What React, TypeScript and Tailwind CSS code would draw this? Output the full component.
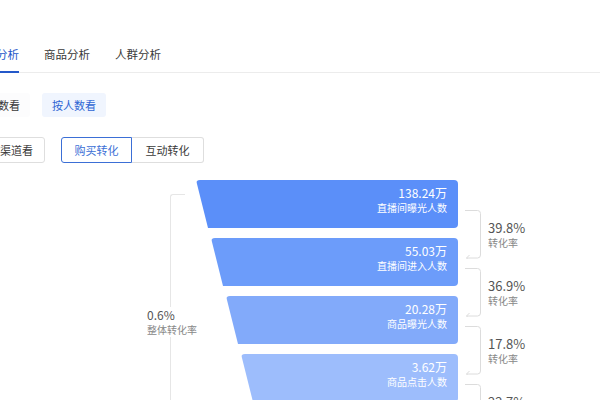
import React from 'react'

const bars = [
  { value: '138.24万', label: '直播间曝光人数', w: 'w-[262px]', bg: 'bg-[#5b8ff9]' },
  { value: '55.03万', label: '直播间进入人数', w: 'w-[247px]', bg: 'bg-[#6c9cfa]' },
  { value: '20.28万', label: '商品曝光人数', w: 'w-[232px]', bg: 'bg-[#82aafa]' },
  { value: '3.62万', label: '商品点击人数', w: 'w-[217px]', bg: 'bg-[#9dbdfc]' },
]

const rates = ['39.8%', '36.9%', '17.8%', '22.7%']

function Bracket() {
  return (
    <svg width="17" height="49" viewBox="0 0 17 49" className="shrink-0">
      <path d="M0 0.5 H12.5 a3 3 0 0 1 3 3 V45 a3 3 0 0 1 -3 3 H1.5" fill="none" stroke="#dcdcdc" strokeWidth="1" />
      <path d="M4.5 45 L1.5 48 L4.5 51" fill="none" stroke="#dcdcdc" strokeWidth="1" />
    </svg>
  )
}

export default function App() {
  return (
    <div className="w-[600px] h-[400px] overflow-hidden bg-white text-[#3a3a3a] font-['Noto_Sans_CJK_SC',sans-serif]">
      {/* tabs */}
      <div className="mt-[44px] flex border-b border-[#ececec]">
        <div className="-ml-[27px] flex gap-[25px] text-[11.5px]">
          <div className="leading-[20px] pb-[7px] border-b-2 border-[#2458c9] -mb-px text-[#2458c9]">流量分析</div>
          <div className="leading-[20px] pb-[7px] -mb-px">商品分析</div>
          <div className="leading-[20px] pb-[7px] -mb-px">人群分析</div>
        </div>
      </div>

      {/* segment */}
      <div className="mt-[20px] -ml-[34px] flex gap-[12px] text-[11px]">
        <div className="h-[24px] px-[10px] flex items-center rounded-[3px] bg-[#fcfcfd]">按次数看</div>
        <div className="h-[24px] px-[10px] flex items-center rounded-[3px] bg-[#f0f5fe] text-[#2f66d4]">按人数看</div>
      </div>

      {/* buttons */}
      <div className="mt-[20px] -ml-[24px] flex text-[11px]">
        <div className="h-[26px] pl-[12px] pr-[11px] flex items-center border border-[#dedede] rounded-[3px]">按渠道看</div>
        <div className="ml-[16px] h-[26px] w-[71px] flex items-center justify-center border border-[#3b6fd6] rounded-l-[3px] text-[#3b6fd6]">购买转化</div>
        <div className="h-[26px] w-[72px] flex items-center justify-center border border-l-0 border-[#dedede] rounded-r-[3px]">互动转化</div>
      </div>

      {/* funnel */}
      <div className="mt-[17px] pl-[147px] flex">
        <div className="w-[49px] shrink-0 flex flex-col">
          <div className="ml-[23px] mt-[14px] h-[113px] w-[15px] border-l border-t border-[#e6e6e6] rounded-tl-[3px]" />
          <div className="bg-white">
            <div className="text-[12px] leading-[16px] text-[#555]">0.6%</div>
            <div className="text-[10px] leading-[14px] text-[#888] whitespace-nowrap">整体转化率</div>
          </div>
          <div className="ml-[23px] flex-1 border-l border-[#e6e6e6]" />
        </div>

        <div className="w-[262px] shrink-0 flex flex-col items-end gap-[10px]">
          {bars.map((b) => (
            <div
              key={b.label}
              className={`${b.w} ${b.bg} h-[48px] shrink-0 rounded-[4px] [clip-path:polygon(0_0,100%_0,100%_100%,12px_100%)] text-right pr-[11px] pt-[5px] text-white`}
            >
              <div className="text-[12px] leading-[16px]">{b.value}</div>
              <div className="text-[10px] leading-[14px]">{b.label}</div>
            </div>
          ))}
        </div>

        <div className="ml-[7px] mt-[30px] flex flex-col gap-[10px]">
          {rates.map((r) => (
            <div key={r} className="h-[48px] flex gap-[6px]">
              <Bracket />
              <div className="pt-[10px]">
                <div className="text-[13px] leading-[15px] text-[#555]">{r}</div>
                <div className="mt-[1px] text-[10px] leading-[14px] text-[#888]">转化率</div>
              </div>
            </div>
          ))}
        </div>
      </div>
    </div>
  )
}
